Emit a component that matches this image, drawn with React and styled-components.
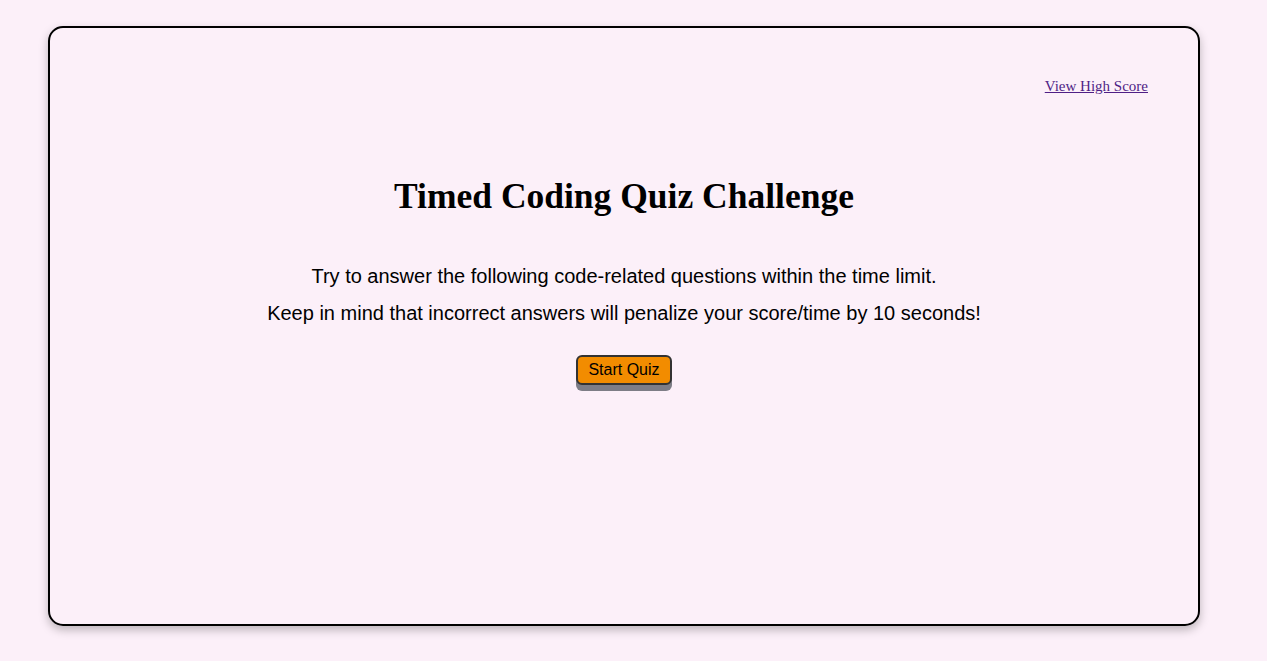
import React from 'react';
import styled, { createGlobalStyle } from 'styled-components';

const GlobalStyle = createGlobalStyle`
  html, body {
    margin: 0;
    padding: 0;
    background: #fcf0f9;
  }
`;

const Page = styled.div`
  padding: 26px 0 35px 48px;
`;

const Card = styled.main`
  box-sizing: border-box;
  width: 1152px;
  height: 600px;
  border: 2px solid #000;
  border-radius: 15px;
  box-shadow: 0 4px 10px rgba(0, 0, 0, 0.25);
  padding: 50px 50px 0 50px;
  display: flex;
  flex-direction: column;
  align-items: center;
`;

const Header = styled.header`
  align-self: stretch;
  display: flex;
  justify-content: flex-end;
`;

const HighScoreLink = styled.a`
  font-family: "Liberation Serif", serif;
  font-size: 15px;
  color: #4f1f86;
  text-decoration: underline;
`;

const Title = styled.h1`
  font-family: "Liberation Serif", serif;
  font-weight: bold;
  font-size: 35.5px;
  margin: 80px 0 41px;
  color: #000;
`;

const Intro = styled.p`
  font-family: "Liberation Sans", Arial, sans-serif;
  font-size: 20px;
  line-height: 37px;
  margin: 0;
  text-align: center;
  color: #000;
`;

const StartButton = styled.button`
  margin-top: 23px;
  font-family: "Liberation Sans", Arial, sans-serif;
  font-size: 16px;
  background: #f28c00;
  color: #000;
  border: 2px solid #333;
  border-radius: 6px;
  padding: 4px 10px;
  box-shadow: 0 6px 0 #7d7d86;
  cursor: pointer;
`;

export default function App() {
  return (
    <>
      <GlobalStyle />
      <Page>
        <Card>
          <Header>
            <HighScoreLink href="#">View High Score</HighScoreLink>
          </Header>
          <Title>Timed Coding Quiz Challenge</Title>
          <Intro>
            Try to answer the following code-related questions within the time limit.
            <br />
            Keep in mind that incorrect answers will penalize your score/time by 10 seconds!
          </Intro>
          <StartButton>Start Quiz</StartButton>
        </Card>
      </Page>
    </>
  );
}
